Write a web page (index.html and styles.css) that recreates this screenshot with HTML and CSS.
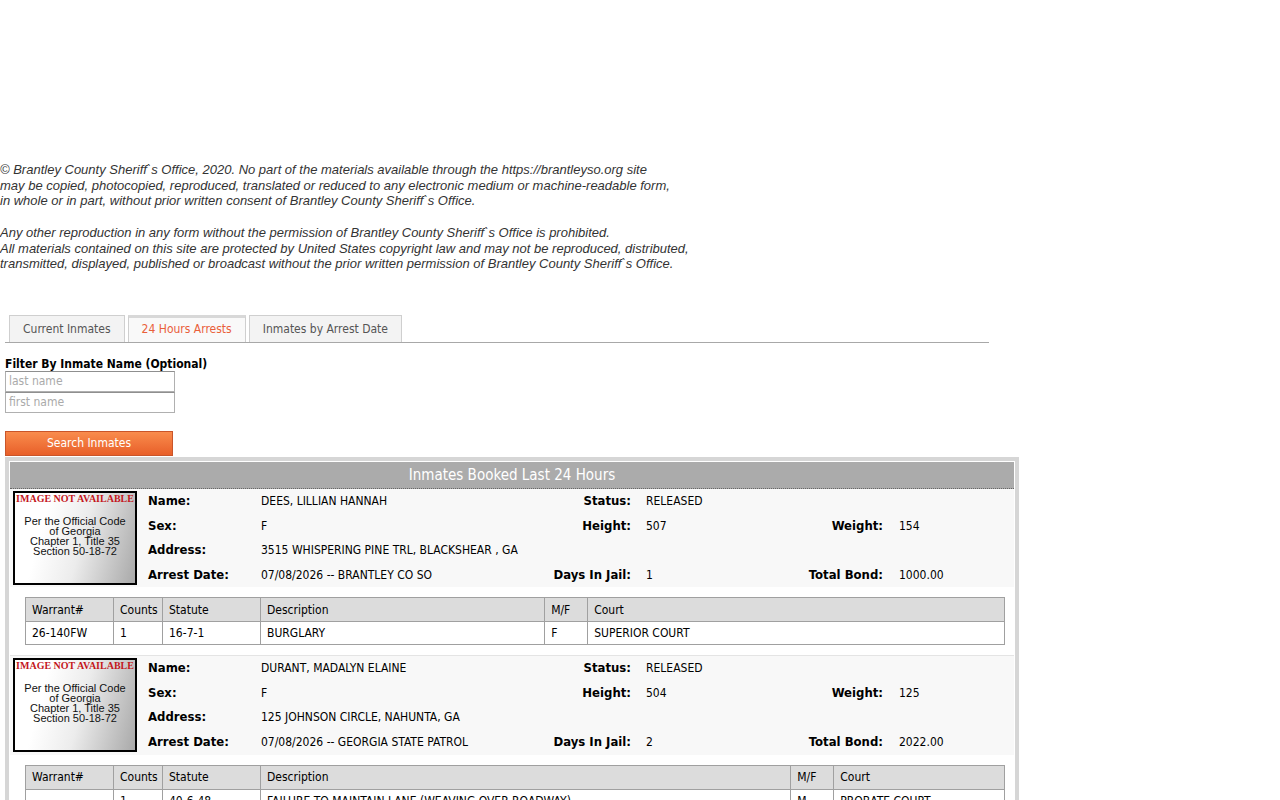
FILE: index.html
```html
<!DOCTYPE html>
<html lang="en">
<head>
  <meta charset="UTF-8" />
  <title>Brantley County Sheriff's Office - 24 Hours Arrests</title>
  <link rel="stylesheet" href="styles.css">
</head>
<body>
  <div class="notice">
    <p>&copy; Brantley County Sheriff`s Office, 2020. No part of the materials available through the https://brantleyso.org site<br>
    may be copied, photocopied, reproduced, translated or reduced to any electronic medium or machine-readable form,<br>
    in whole or in part, without prior written consent of Brantley County Sheriff`s Office.</p>
    <p>Any other reproduction in any form without the permission of Brantley County Sheriff`s Office is prohibited.<br>
    All materials contained on this site are protected by United States copyright law and may not be reproduced, distributed,<br>
    transmitted, displayed, published or broadcast without the prior written permission of Brantley County Sheriff`s Office.</p>
  </div>

  <div class="page">
    <ul class="tabs">
      <li><a href="#">Current Inmates</a></li>
      <li class="active"><a href="#">24 Hours Arrests</a></li>
      <li><a href="#">Inmates by Arrest Date</a></li>
    </ul>

    <form class="filter" onsubmit="return false;">
      <label>Filter By Inmate Name (Optional)</label>
      <input type="text" placeholder="last name">
      <input type="text" placeholder="first name">
      <button type="submit">Search Inmates</button>
    </form>

    <div class="results">
      <div class="results-inner">
        <div class="results-header">Inmates Booked Last 24 Hours</div>

        <div class="record">
          <div class="inmate">
            <div class="photo">
              <span class="photo-title">IMAGE NOT AVAILABLE</span>
              <span class="photo-text">Per the Official Code<br>of Georgia<br>Chapter 1, Title 35<br>Section 50-18-72</span>
            </div>
            <div class="lbl">Name:</div><div class="val">DEES, LILLIAN HANNAH</div>
            <div class="lbl right">Status:</div><div class="val">RELEASED</div>
            <div class="lbl right"></div><div class="val"></div>

            <div class="lbl">Sex:</div><div class="val">F</div>
            <div class="lbl right">Height:</div><div class="val">507</div>
            <div class="lbl right last">Weight:</div><div class="val">154</div>

            <div class="lbl">Address:</div><div class="val">3515 WHISPERING PINE TRL, BLACKSHEAR , GA</div>
            <div class="lbl right"></div><div class="val"></div>
            <div class="lbl right"></div><div class="val"></div>

            <div class="lbl">Arrest Date:</div><div class="val">07/08/2026 -- BRANTLEY CO SO</div>
            <div class="lbl right">Days In Jail:</div><div class="val">1</div>
            <div class="lbl right last">Total Bond:</div><div class="val">1000.00</div>
          </div>
          <table class="charges">
            <tr>
              <th class="c-warrant">Warrant#</th>
              <th class="c-counts">Counts</th>
              <th class="c-statute">Statute</th>
              <th>Description</th>
              <th class="c-mf">M/F</th>
              <th>Court</th>
            </tr>
            <tr>
              <td>26-140FW</td>
              <td>1</td>
              <td>16-7-1</td>
              <td>BURGLARY</td>
              <td>F</td>
              <td>SUPERIOR COURT</td>
            </tr>
          </table>
        </div>

        <div class="record">
          <div class="inmate">
            <div class="photo">
              <span class="photo-title">IMAGE NOT AVAILABLE</span>
              <span class="photo-text">Per the Official Code<br>of Georgia<br>Chapter 1, Title 35<br>Section 50-18-72</span>
            </div>
            <div class="lbl">Name:</div><div class="val">DURANT, MADALYN ELAINE</div>
            <div class="lbl right">Status:</div><div class="val">RELEASED</div>
            <div class="lbl right"></div><div class="val"></div>

            <div class="lbl">Sex:</div><div class="val">F</div>
            <div class="lbl right">Height:</div><div class="val">504</div>
            <div class="lbl right last">Weight:</div><div class="val">125</div>

            <div class="lbl">Address:</div><div class="val">125 JOHNSON CIRCLE, NAHUNTA, GA</div>
            <div class="lbl right"></div><div class="val"></div>
            <div class="lbl right"></div><div class="val"></div>

            <div class="lbl">Arrest Date:</div><div class="val">07/08/2026 -- GEORGIA STATE PATROL</div>
            <div class="lbl right">Days In Jail:</div><div class="val">2</div>
            <div class="lbl right last">Total Bond:</div><div class="val">2022.00</div>
          </div>
          <table class="charges">
            <tr>
              <th class="c-warrant">Warrant#</th>
              <th class="c-counts">Counts</th>
              <th class="c-statute">Statute</th>
              <th>Description</th>
              <th class="c-mf">M/F</th>
              <th>Court</th>
            </tr>
            <tr>
              <td></td>
              <td>1</td>
              <td>40-6-48</td>
              <td>FAILURE TO MAINTAIN LANE (WEAVING OVER ROADWAY)</td>
              <td>M</td>
              <td>PROBATE COURT</td>
            </tr>
          </table>
        </div>
      </div>
    </div>
  </div>
</body>
</html>
```

FILE: styles.css
```css
* {
  box-sizing: border-box;
}

body {
  margin: 0;
  background: #fff;
  color: #000;
  font-family: "DejaVu Sans Condensed", "DejaVu Sans", sans-serif;
  font-stretch: condensed;
  font-size: 12px;
}

.notice {
  padding-top: 162px;
  font-family: "Liberation Sans", Arial, sans-serif;
  font-stretch: normal;
  font-style: italic;
  font-size: 13px;
  line-height: 15.7px;
  color: #333;
}

.notice p {
  margin: 0 0 15.7px 0;
}

.page {
  margin-left: 5px;
}

/* tabs */
.tabs {
  list-style: none;
  margin: 43px 0 0 0;
  padding: 0 0 0 4px;
  width: 984px;
  height: 28px;
  border-bottom: 1px solid #a8a8a8;
  display: flex;
  gap: 3px;
}

.tabs li {
  height: 27px;
  border: 1px solid #cfcfcf;
  border-bottom: none;
  background: #f3f3f3;
}

.tabs li a {
  display: block;
  padding: 5px 13px 0 13px;
  line-height: 16px;
  color: #555;
  text-decoration: none;
}

.tabs li.active {
  border-top: 3px solid #d8d8d8;
  background: #f9f9f9;
}

.tabs li.active a {
  padding-top: 3px;
  color: #e9603a;
}

/* filter */
.filter label {
  display: block;
  margin-top: 14px;
  font-weight: bold;
  line-height: 14px;
  white-space: nowrap;
}

.filter input {
  display: block;
  width: 170px;
  height: 21px;
  margin: 0;
  padding: 0 3px;
  border: 1px solid #b0b0b0;
  border-top-color: #8f8f8f;
  font-family: inherit;
  font-size: 12px;
}

.filter input::placeholder {
  color: #aaa;
}

.filter button {
  display: block;
  margin-top: 18px;
  width: 168px;
  height: 25px;
  border: 1px solid #c9552a;
  background: linear-gradient(#f98c4d, #e85f29);
  color: #fff;
  font-family: inherit;
  font-size: 12px;
  cursor: pointer;
}

/* results */
.results {
  margin-top: 1px;
  width: 1014px;
  padding: 4px;
  background: #d6d6d6;
}

.results-inner {
  border: 1px solid #fff;
  background: #fff;
}

.results-header {
  height: 27px;
  line-height: 26px;
  background: #ababab;
  border-bottom: 1px dotted #666;
  color: #fff;
  text-align: center;
  font-size: 15px;
}

.record {
  border-bottom: 1px solid #e4e4e4;
  padding-bottom: 10px;
}

.inmate {
  display: grid;
  grid-template-columns: 138px 113px 280px 105px 157px 96px 1fr;
  grid-template-rows: repeat(4, 24.6px);
  background: #f8f8f8;
}

.photo {
  grid-row: 1 / 5;
  margin: 2px 0 0 3px;
  width: 124px;
  height: 94px;
  border: 2px solid #000;
  background: linear-gradient(105deg, #fff 25%, #ececec 55%, #a9a9a9);
  text-align: center;
}

.photo-title {
  display: block;
  font-family: "Liberation Serif", "Times New Roman", serif;
  font-stretch: normal;
  font-weight: bold;
  font-size: 10px;
  line-height: 12px;
  white-space: nowrap;
  color: #c4161c;
}

.photo-text {
  display: block;
  margin-top: 11px;
  font-family: "Liberation Sans", Arial, sans-serif;
  font-stretch: normal;
  font-size: 11px;
  line-height: 10px;
  color: #111;
}

.lbl {
  font-weight: bold;
  font-size: 13px;
  line-height: 24.6px;
  white-space: nowrap;
}

.lbl.right {
  text-align: right;
  padding-right: 15px;
}

.lbl.right.last {
  padding-right: 16px;
}

.val {
  line-height: 24.6px;
  white-space: nowrap;
}

/* charges table */
.charges {
  margin: 10px 0 0 15px;
  width: 980px;
  border-collapse: collapse;
  border: 1px solid #a0a0a0;
}

.charges th,
.charges td {
  border: 1px solid #a0a0a0;
  padding: 0 4px 0 6px;
  text-align: left;
  font-weight: normal;
  white-space: nowrap;
}

.charges th {
  height: 24px;
  background: #dcdcdc;
}

.charges td {
  height: 23px;
  background: #fff;
}

.charges .c-warrant {
  width: 88px;
}

.charges .c-counts {
  width: 49px;
}

.charges .c-statute {
  width: 98px;
}

.charges .c-mf {
  width: 43px;
}
```
